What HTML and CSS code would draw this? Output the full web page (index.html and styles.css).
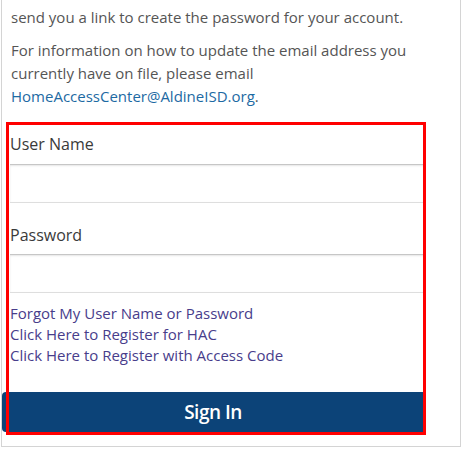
FILE: index.html
```html
<!DOCTYPE html>
<html lang="en">
<head>
<meta charset="utf-8">
<title>Home Access Center - Sign In</title>
<link rel="stylesheet" href="styles.css">
</head>
<body>
<div class="card">
  <p class="intro">send you a link to create the password for your account.</p>
  <p class="intro">For information on how to update the email address you currently have on file, please email <a class="mail" href="#">HomeAccessCenter@AldineISD.org</a>.</p>
  <form class="login">
    <label class="field-label" for="user">User Name</label>
    <input class="field" id="user" type="text">
    <label class="field-label second" for="pass">Password</label>
    <input class="field" id="pass" type="password">
    <div class="links">
      <a href="#">Forgot My User Name or Password</a>
      <a href="#">Click Here to Register for HAC</a>
      <a href="#">Click Here to Register with Access Code</a>
    </div>
    <button class="signin" type="button">Sign In</button>
  </form>
</div>
<div class="highlight"></div>
</body>
</html>
```
FILE: styles.css
```css
html, body {
  margin: 0;
  padding: 0;
  background: #fff;
}
body {
  width: 463px;
  height: 450px;
  overflow: hidden;
  position: relative;
  font-family: "Open Sans", "Liberation Sans", sans-serif;
}
.card {
  margin: -19px 0 0 1px;
  width: 460px;
  box-sizing: border-box;
  border: 1px solid #d4d4d4;
  background: #fff;
  padding: 24px 0 14px 0;
}
.intro {
  margin: 0 0 10px 9px;
  font-size: 15px;
  line-height: 23px;
  color: #555;
}
.mail {
  color: #1d6aa3;
  text-decoration: none;
}
.login {
  margin: 25px 36px 0 8px;
  display: flex;
  flex-direction: column;
}
.field-label {
  font-size: 16px;
  line-height: 23px;
  color: #3a3a3a;
  margin-bottom: 8px;
}
.field-label.second {
  margin-top: 21px;
  margin-bottom: 7px;
}
.field {
  height: 39px;
  box-sizing: border-box;
  border: none;
  border-top: 1px solid #c6c6c6;
  border-bottom: 1px solid #dedede;
  box-shadow: inset 0 1px 2px rgba(0,0,0,0.10);
  background: #fff;
  margin: 0;
  padding: 0 8px;
  outline: none;
}
.links {
  margin-top: 10px;
  display: flex;
  flex-direction: column;
}
.links a {
  font-size: 15px;
  line-height: 20.8px;
  color: #483d8b;
  text-decoration: none;
}
.signin {
  margin: 27px 0 0 -8px;
  height: 40px;
  border: none;
  border-radius: 4px 0 0 4px;
  background: #0c4378;
  color: #fff;
  font-family: "Open Sans", "Liberation Sans", sans-serif;
  font-size: 19px;
  font-weight: 600;
  letter-spacing: -0.5px;
  padding: 0;
}
.highlight {
  position: absolute;
  left: 6px;
  top: 122px;
  width: 420px;
  height: 313px;
  box-sizing: border-box;
  border: 3px solid #ff0000;
  pointer-events: none;
}
```
